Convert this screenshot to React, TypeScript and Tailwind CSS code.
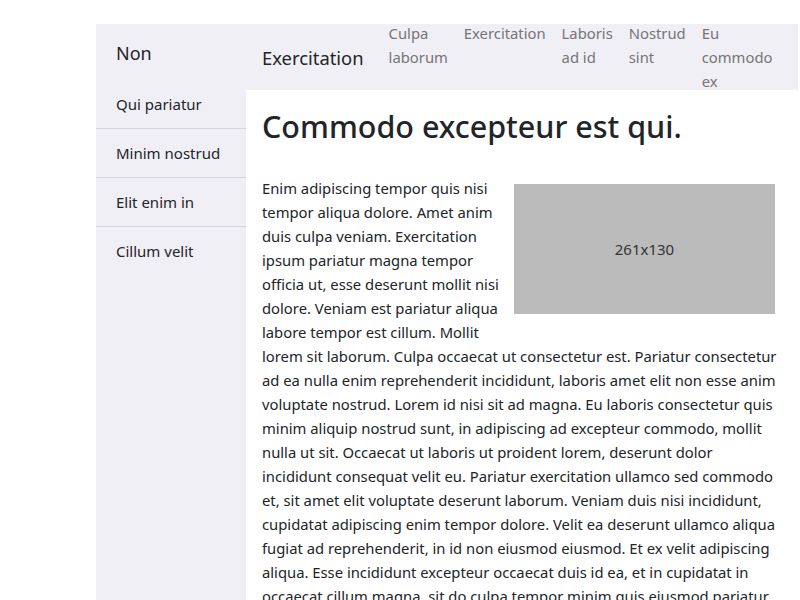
import React from "react";

const sideItems = ["Qui pariatur", "Minim nostrud", "Elit enim in", "Cillum velit"];
const navItems = ["Culpa laborum", "Exercitation", "Laboris ad id", "Nostrud sint", "Eu commodo ex"];

export default function App() {
  return (
    <div
      className="min-h-[600px] pl-[96px] pt-[24px] bg-white text-[#212529]"
      style={{ fontFamily: '"Noto Sans", "Open Sans", sans-serif' }}
    >
      <div className="flex min-h-[576px] w-[702px]">
        <aside className="w-[150px] shrink-0 bg-[#f1eff6]">
          <div className="px-5 pt-[15px] pb-[13px] text-[18px] leading-[28px]">Non</div>
          <ul>
            {sideItems.map((s, i) => (
              <li
                key={s}
                className={
                  "px-5 py-3 text-[15px] leading-6 " +
                  (i < sideItems.length - 1 ? "border-b border-[#d6d4dc]" : "")
                }
              >
                {s}
              </li>
            ))}
          </ul>
        </aside>
        <div className="flex-1 min-w-0 flex flex-col">
          <header className="h-[66px] bg-[#f1eff6] flex items-center pl-4">
            <div className="text-[18.4px] leading-7 shrink-0 mr-[25px] mt-[2px]">Exercitation</div>
            <nav className="flex gap-[16px] text-[14.8px] leading-6 text-[#757575]">
              {navItems.map((n) => (
                <span key={n} className="w-min">
                  {n}
                </span>
              ))}
            </nav>
          </header>
          <main className="flex-1 bg-white px-4 pt-[17px]">
            <h1 className="text-[30.5px] leading-[38px] font-medium mb-[31px]">Commodo excepteur est qui.</h1>
            <div className="text-[14.8px] leading-6">
              <div className="float-right w-[261px] h-[130px] bg-[#bbbbbb] mt-2 ml-[5px] mr-[7px] mb-2 flex items-center justify-center text-[15px] text-[#333]">
                261x130
              </div>
              <p>
                Enim adipiscing tempor quis nisi tempor aliqua dolore. Amet anim duis culpa veniam. Exercitation
                ipsum pariatur magna tempor officia ut, esse deserunt mollit nisi dolore. Veniam est pariatur aliqua
                labore tempor est cillum. Mollit lorem sit laborum. Culpa occaecat ut consectetur est. Pariatur
                consectetur ad ea nulla enim reprehenderit incididunt, laboris amet elit non esse anim voluptate
                nostrud. Lorem id nisi sit ad magna. Eu laboris consectetur quis minim aliquip nostrud sunt, in
                adipiscing ad excepteur commodo, mollit nulla ut sit. Occaecat ut laboris ut proident lorem, deserunt
                dolor incididunt consequat velit eu. Pariatur exercitation ullamco sed commodo et, sit amet elit
                voluptate deserunt laborum. Veniam duis nisi incididunt, cupidatat adipiscing enim tempor dolore.
                Velit ea deserunt ullamco aliqua fugiat ad reprehenderit, in id non eiusmod eiusmod. Et ex velit
                adipiscing aliqua. Esse incididunt excepteur occaecat duis id ea, et in cupidatat in occaecat cillum
                magna, sit do culpa tempor minim quis eiusmod pariatur.
              </p>
            </div>
          </main>
        </div>
      </div>
    </div>
  );
}
